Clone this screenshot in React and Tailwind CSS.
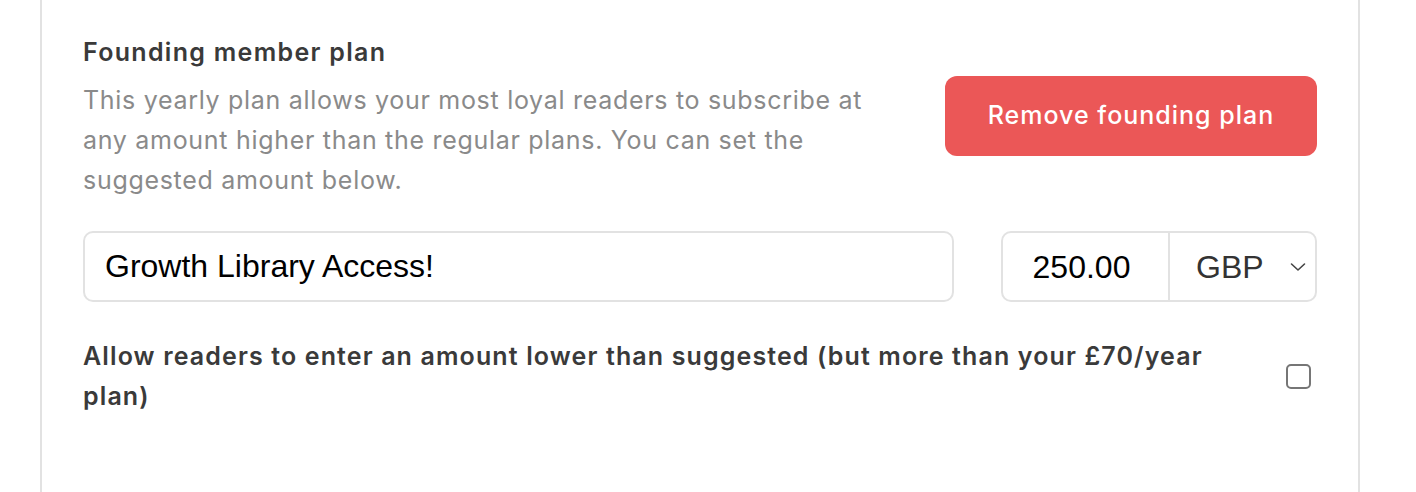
import React, { useState } from "react";

export default function App() {
  const [allowLower, setAllowLower] = useState(false);
  const [name, setName] = useState("Growth Library Access!");
  const [amount, setAmount] = useState("250.00");

  return (
    <div className="min-h-[492px] bg-white" style={{ fontFamily: "Inter, 'Noto Sans', sans-serif" }}>
      <div className="ml-[40px] w-[1320px] min-h-[492px] border-x-2 border-[#e2e2e2] px-[41px] pt-[32px]">
        <div className="flex items-center justify-between">
          <div className="w-[800px]">
            <h3 className="text-[25px] leading-[40px] font-semibold tracking-[0.052em] text-[#3a3a3a]">Founding member plan</h3>
            <p className="mt-[8px] text-[25px] leading-[40px] tracking-[0.028em] text-[#8a8a8a]">
              This yearly plan allows your most loyal readers to subscribe at any amount higher than the regular plans. You can set the suggested amount below.
            </p>
          </div>
          <button className="w-[372px] h-[80px] rounded-[12px] bg-[#eb5757] text-white text-[25px] font-medium tracking-[0.04em]">
            Remove founding plan
          </button>
        </div>

        <div className="mt-[31px] flex items-center justify-between" style={{ fontFamily: "'Liberation Sans', Arial, sans-serif" }}>
          <input
            value={name}
            onChange={(e) => setName(e.target.value)}
            className="w-[871px] h-[71px] rounded-[10px] border-2 border-[#e2e2e2] px-[20px] text-[32px] text-black outline-none"
          />
          <div className="flex w-[316px] h-[71px] rounded-[10px] border-2 border-[#e2e2e2] overflow-hidden">
            <input
              value={amount}
              onChange={(e) => setAmount(e.target.value)}
              className="w-[167px] border-r-2 border-[#e2e2e2] pr-[8px] text-center text-[32px] text-black outline-none"
            />
            <div className="flex-1 flex items-center justify-between pl-[26px] pr-[9px]">
              <span className="text-[32px] text-[#333]">GBP</span>
              <svg width="16" height="10" viewBox="0 0 16 10" fill="none" stroke="#444" strokeWidth="1.6" strokeLinecap="round" strokeLinejoin="round">
                <path d="M1.5 2l6.5 6 6.5-6" />
              </svg>
            </div>
          </div>
        </div>

        <div className="mt-[34px] flex items-center justify-between">
          <p className="w-[1140px] text-[25px] leading-[40px] font-semibold tracking-[0.045em] text-[#3a3a3a]">
            Allow readers to enter an amount lower than suggested (but more than your £70/year plan)
          </p>
          <button
            onClick={() => setAllowLower(!allowLower)}
            className="mr-[6px] w-[25px] h-[25px] rounded-[5px] border-2 border-[#767676] bg-white"
          />
        </div>
      </div>
    </div>
  );
}
